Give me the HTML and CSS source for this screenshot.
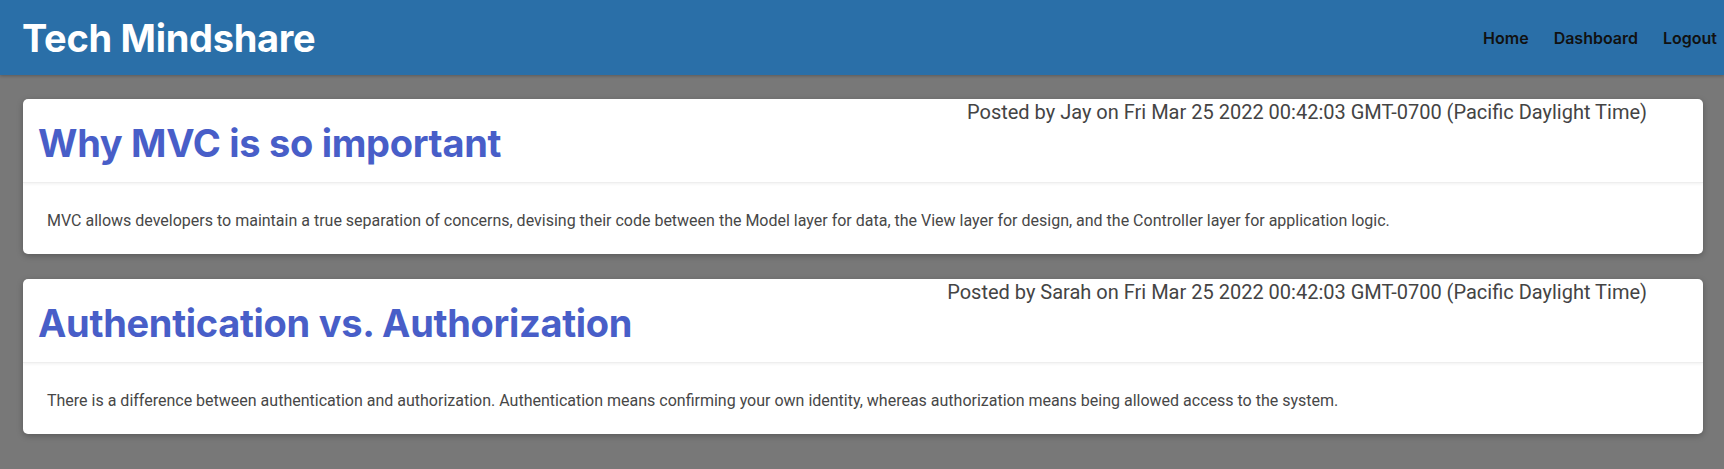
FILE: index.html
```html
<!DOCTYPE html>
<html lang="en">
<head>
<meta charset="utf-8">
<title>Tech Mindshare</title>
<link rel="stylesheet" href="styles.css">
</head>
<body>
<header class="site-header">
  <h1 class="brand">Tech Mindshare</h1>
  <nav class="nav">
    <a href="#" class="nav-link">Home</a>
    <a href="#" class="nav-link">Dashboard</a>
    <a href="#" class="nav-link">Logout</a>
  </nav>
</header>
<main class="posts">
  <article class="card">
    <div class="card-header">
      <p class="meta">Posted by Jay on Fri Mar 25 2022 00:42:03 GMT-0700 (Pacific Daylight Time)</p>
      <h2 class="post-title">Why MVC is so important</h2>
    </div>
    <div class="card-body">
      <p class="post-text">MVC allows developers to maintain a true separation of concerns, devising their code between the Model layer for data, the View layer for design, and the Controller layer for application logic.</p>
    </div>
  </article>
  <article class="card">
    <div class="card-header">
      <p class="meta">Posted by Sarah on Fri Mar 25 2022 00:42:03 GMT-0700 (Pacific Daylight Time)</p>
      <h2 class="post-title">Authentication vs. Authorization</h2>
    </div>
    <div class="card-body">
      <p class="post-text">There is a difference between authentication and authorization. Authentication means confirming your own identity, whereas authorization means being allowed access to the system.</p>
    </div>
  </article>
</main>
</body>
</html>
```

FILE: styles.css
```css
* {
  box-sizing: border-box;
}

html, body {
  margin: 0;
  padding: 0;
}

body {
  background: #787878;
  font-family: Roboto, "Liberation Sans", sans-serif;
  min-height: 469px;
}

.site-header {
  height: 75px;
  background: #2a6fa8;
  display: flex;
  align-items: center;
  justify-content: space-between;
  padding: 0 7px 0 22px;
  box-shadow: 0 1px 3px rgba(0, 0, 0, 0.25);
}

.brand {
  margin: 0;
  font-family: Inter, "Noto Sans", sans-serif;
  font-weight: 700;
  font-size: 38px;
  line-height: 46px;
  color: #ffffff;
  letter-spacing: -0.3px;
}

.nav {
  display: flex;
  gap: 25px;
}

.nav-link {
  font-family: Inter, "Noto Sans", sans-serif;
  font-weight: 600;
  font-size: 16px;
  color: #111;
  text-decoration: none;
}

.posts {
  padding: 24px 21px 24px 23px;
  display: flex;
  flex-direction: column;
  gap: 25px;
}

.card {
  background: #fff;
  border-radius: 5px;
  box-shadow: 0 2px 6px rgba(0, 0, 0, 0.25);
  overflow: hidden;
}

.card-header {
  height: 84px;
  padding: 3px 56px 0 15px;
  border-bottom: 1px solid #eeeeee;
  box-shadow: 0 1px 3px rgba(0, 0, 0, 0.06);
  position: relative;
}

.meta {
  margin: 0;
  text-align: right;
  font-size: 20px;
  line-height: 20px;
  color: #444;
}

.post-title {
  margin: 0;
  font-family: Inter, "Noto Sans", sans-serif;
  font-weight: 700;
  font-size: 38px;
  line-height: 42px;
  color: #485ec8;
  letter-spacing: -0.3px;
}

.card-body {
  height: 71px;
  padding: 4px 24px 0;
  display: flex;
  align-items: center;
}

.post-text {
  margin: 0;
  font-size: 16px;
  line-height: 20px;
  color: #474747;
}
```
